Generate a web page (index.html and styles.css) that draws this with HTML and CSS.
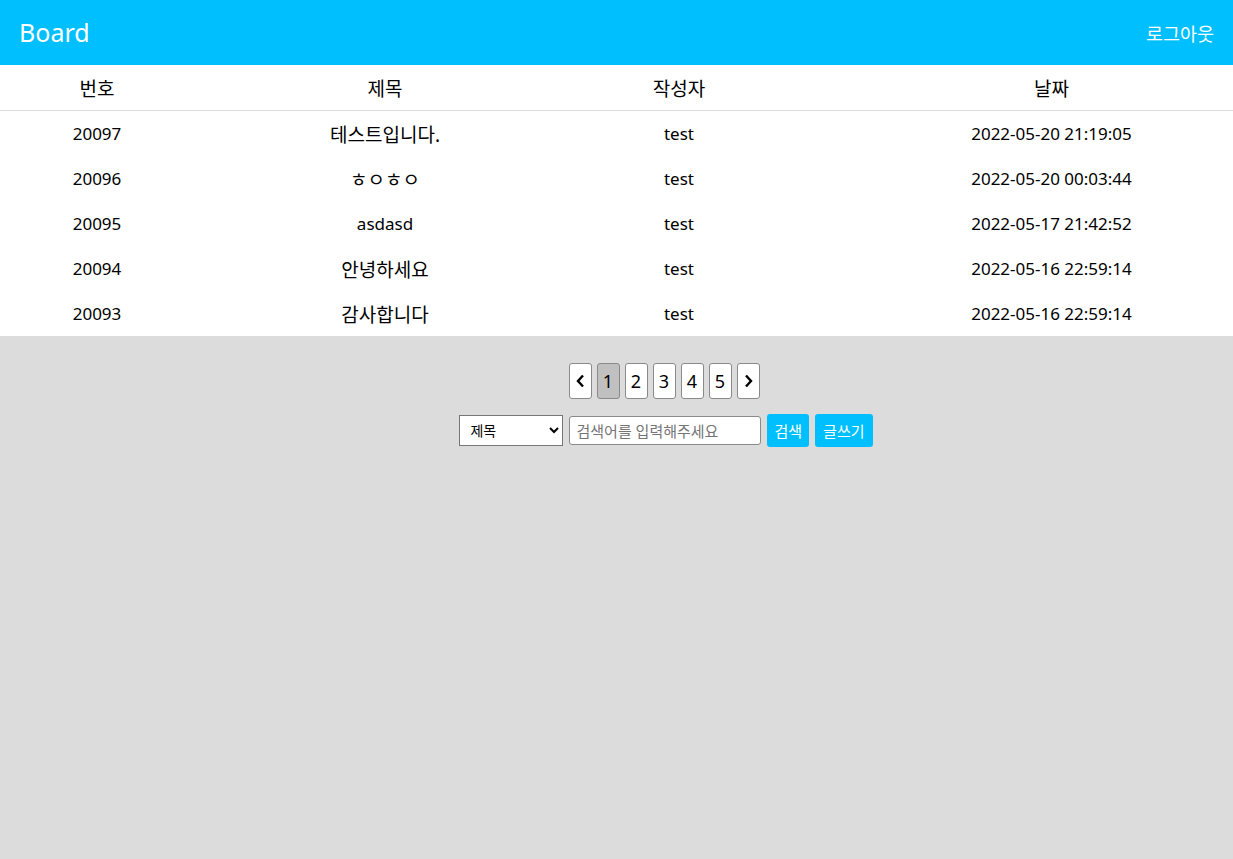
FILE: index.html
```html
<!DOCTYPE html>
<html lang="ko">
<head>
<meta charset="utf-8">
<title>Board</title>
<link rel="stylesheet" href="styles.css">
</head>
<body>
<header class="topbar">
  <div class="brand">Board</div>
  <a class="logout" href="#">로그아웃</a>
</header>
<main>
  <table class="board">
    <colgroup>
      <col class="c-num"><col class="c-title"><col class="c-writer"><col class="c-date">
    </colgroup>
    <thead>
      <tr><th>번호</th><th>제목</th><th>작성자</th><th class="date">날짜</th></tr>
    </thead>
    <tbody>
      <tr><td>20097</td><td class="title">테스트입니다.</td><td>test</td><td class="date">2022-05-20 21:19:05</td></tr>
      <tr><td>20096</td><td class="title">ㅎㅇㅎㅇ</td><td>test</td><td class="date">2022-05-20 00:03:44</td></tr>
      <tr><td>20095</td><td class="title latin">asdasd</td><td>test</td><td class="date">2022-05-17 21:42:52</td></tr>
      <tr><td>20094</td><td class="title">안녕하세요</td><td>test</td><td class="date">2022-05-16 22:59:14</td></tr>
      <tr><td>20093</td><td class="title">감사합니다</td><td>test</td><td class="date">2022-05-16 22:59:14</td></tr>
    </tbody>
  </table>
  <nav class="pager">
    <button class="pg" aria-label="이전"><svg width="9" height="14" viewBox="0 0 9 14"><polyline points="7,1.5 2,7 7,12.5" fill="none" stroke="#000" stroke-width="2.4"/></svg></button>
    <button class="pg active">1</button>
    <button class="pg">2</button>
    <button class="pg">3</button>
    <button class="pg">4</button>
    <button class="pg">5</button>
    <button class="pg" aria-label="다음"><svg width="9" height="14" viewBox="0 0 9 14"><polyline points="2,1.5 7,7 2,12.5" fill="none" stroke="#000" stroke-width="2.4"/></svg></button>
  </nav>
  <form class="search">
    <select class="sel"><option>제목</option><option>작성자</option></select>
    <input class="query" type="text" placeholder="검색어를 입력해주세요">
    <button type="button" class="btn">검색</button>
    <button type="button" class="btn">글쓰기</button>
  </form>
</main>
</body>
</html>
```
FILE: styles.css
```css
html, body { margin: 0; padding: 0; }
body {
  background: #dcdcdc;
  font-family: "Noto Sans", "Noto Sans CJK KR", sans-serif;
  color: #000;
  min-height: 859px;
}
.topbar {
  height: 65px;
  background: #00bfff;
  display: flex;
  align-items: center;
  justify-content: space-between;
  padding: 0 19px;
  box-sizing: border-box;
}
.brand {
  color: #fff;
  font-size: 25px;
  line-height: 1;
}
.logout {
  color: #fff;
  text-decoration: none;
  font-size: 18.5px;
}
.board {
  width: 100%;
  border-collapse: collapse;
  background: #fff;
  table-layout: fixed;
}
.c-num { width: 194px; }
.c-title { width: 382px; }
.c-writer { width: 206px; }
.board th, .board td {
  text-align: center;
  font-weight: normal;
  padding: 0;
  height: 45px;
  font-size: 17px;
}
.board th { font-size: 19px; border-bottom: 1px solid #dcdcdc; height: 45px; }
.board td.title { font-size: 19px; }
.board td.title.latin { font-size: 17px; }
.board .date { padding-left: 88px; }
.pager {
  display: flex;
  justify-content: center;
  gap: 5px;
  margin-top: 27px;
  padding-left: 95px;
}
.pg {
  width: 23px;
  height: 36px;
  padding: 0;
  border: 1px solid #8a8a8a;
  border-radius: 3px;
  background: #fff;
  font-family: inherit;
  font-size: 18px;
  color: #000;
  display: flex;
  align-items: center;
  justify-content: center;
}
.pg.active { background: #c0c0c0; }
.search {
  display: flex;
  justify-content: center;
  align-items: center;
  gap: 6px;
  margin-top: 15px;
  padding-left: 99px;
}
.sel {
  width: 104px;
  height: 31px;
  font-family: inherit;
  font-size: 14px;
  border: 1px solid #767676;
  border-radius: 0;
  background: #fff;
  padding: 0 6px;
}
.query {
  width: 192px;
  height: 29px;
  box-sizing: border-box;
  border: 1px solid #8a8a8a;
  border-radius: 3px;
  font-family: inherit;
  font-size: 15px;
  padding: 0 6px;
}
.btn {
  height: 33px;
  border: none;
  border-radius: 3px;
  background: #00bfff;
  color: #fff;
  font-family: inherit;
  font-size: 15px;
  padding: 0 7px;
}
.btn + .btn { padding: 0 8px; }
```
